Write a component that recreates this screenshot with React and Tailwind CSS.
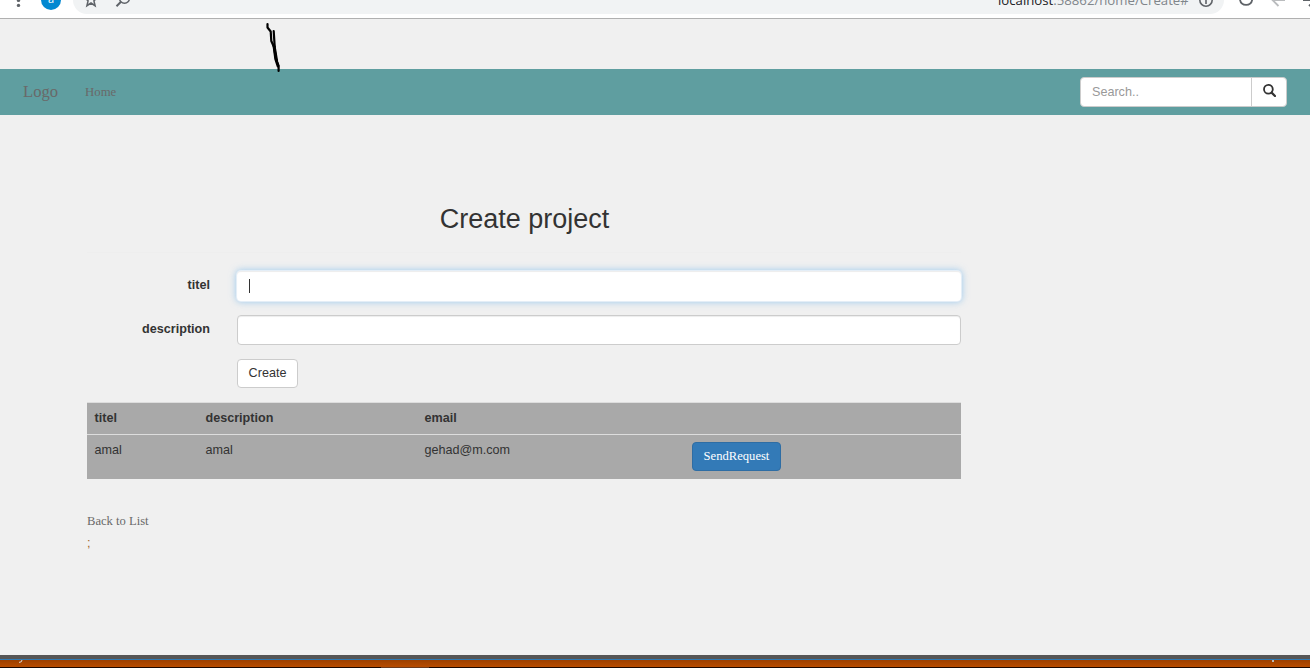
import React from "react";

function BrowserBar() {
  return (
    <div className="h-[19px] shrink-0 overflow-hidden border-b border-[#b0b0b0] bg-white">
      <div className="-mt-[14px] flex h-7 items-center">
        <svg className="h-7 w-[73px] shrink-0" viewBox="0 -14 73 28">
          <g fill="#5f6368">
            <circle cx="18.5" cy="-4.4" r="1.7" />
            <circle cx="18.5" cy="0.4" r="1.7" />
            <circle cx="18.5" cy="5.4" r="1.7" />
          </g>
          <circle cx="51" cy="0" r="10" fill="#0288d1" />
          <text x="51" y="3" textAnchor="middle" fontSize="11" fill="#fff" fontFamily="Open Sans, sans-serif">a</text>
        </svg>
        <div className="flex h-7 w-[1151px] shrink-0 items-center justify-between rounded-full bg-[#f1f3f4]">
          <svg className="h-7 w-[70px]" viewBox="73 -14 70 28" fill="none" stroke="#5f6368" strokeWidth="1.5">
            <path d="M91 -7.5 L92.8 -2.6 L97.5 -2.3 L93.9 .8 L95.1 5.7 L91 3 L86.9 5.7 L88.1 .8 L84.5 -2.3 L89.2 -2.6 Z" />
            <circle cx="124.5" cy="-1.8" r="5" />
            <path d="M121 1.7 L116.5 6.2" strokeWidth="2" />
          </svg>
          <div className="flex items-center">
            <span className="w-[191px] whitespace-nowrap font-['Open_Sans',sans-serif] text-[13.2px] leading-7 text-[#80868b]">
              <span className="text-[#202124]">localhost</span>:58862/home/Create#
            </span>
            <svg className="h-7 w-[35px]" viewBox="1189 -14 35 28" fill="none" stroke="#5f6368" strokeWidth="1.6">
              <circle cx="1206" cy="0" r="6.2" />
              <path d="M1206 -1 V4 M1206 -4 V-2.5" />
            </svg>
          </div>
        </div>
        <svg className="h-7 w-[86px] shrink-0" viewBox="1224 -14 86 28" fill="none" strokeWidth="1.8">
          <path d="M1240 -.2 A6.2 6.2 0 0 0 1252.2 -.2" stroke="#5f6368" />
          <path d="M1285 0 H1272.5 M1278.5 -6 L1272.5 0 L1278.5 6" stroke="#babcbe" />
          <path d="M1303 0 H1316 M1309 6 L1315 0" stroke="#5f6368" />
        </svg>
      </div>
    </div>
  );
}

function NavBar() {
  return (
    <nav className="mt-[50px] flex h-[46px] items-center bg-[#5f9ea0] pl-[23px] pr-[23px] font-['Liberation_Serif',serif] text-[#696969]">
      <a className="w-[62px] text-[16.6px] leading-[18px]">Logo</a>
      <a className="text-[12.8px] leading-[18px]">Home</a>
      <div className="ml-auto flex h-[30px] w-[207px] overflow-hidden rounded-[4px] border border-[#ccc] bg-white font-['Liberation_Sans',sans-serif] text-[12.6px]">
        <div className="flex w-[171px] items-center border-r border-[#ccc] pl-[11px] text-[#999]">Search..</div>
        <button className="flex flex-1 items-center justify-center pb-[3px]">
          <svg className="h-[13px] w-[13px]" viewBox="0 0 13 13" fill="none" stroke="#333">
            <circle cx="5.4" cy="5.3" r="4.4" strokeWidth="1.8" />
            <path d="M8.6 8.6 L12 12" strokeWidth="2.2" strokeLinecap="round" />
          </svg>
        </button>
      </div>
    </nav>
  );
}

function ProjectForm() {
  return (
    <div className="grid grid-cols-[124px_724px] gap-x-[26px] gap-y-[14px]">
      <label className="pr-px pt-[5px] text-right font-bold">titel</label>
      <div className="flex h-[30px] items-center rounded-[4px] bg-white pl-3 shadow-[inset_0_1px_1px_rgba(0,0,0,0.075),0_0_7px_1px_rgba(102,175,233,0.6)] ring-1 ring-[#e4eef7]">
        <span className="h-[14px] w-px bg-[#333]" />
      </div>
      <label className="pr-px pt-[5px] text-right font-bold">description</label>
      <div className="h-[30px] rounded-[4px] border border-[#ccc] bg-white shadow-[inset_0_1px_1px_rgba(0,0,0,0.075)]" />
      <button className="col-start-2 h-[29px] w-[61px] rounded-[4px] border border-[#ccc] bg-white pb-[2px] text-[#333]">Create</button>
    </div>
  );
}

function ProjectTable() {
  return (
    <table className="mt-[14px] w-[874px] table-fixed border-collapse bg-[#a9a9a9] text-left">
      <colgroup>
        <col className="w-[111px]" />
        <col className="w-[219px]" />
        <col className="w-[267px]" />
        <col className="w-[277px]" />
      </colgroup>
      <thead>
        <tr className="h-[32px] border-t border-[#ddd] align-top">
          <th className="pl-[7.5px] pt-[6px]">titel</th>
          <th className="pl-[7.5px] pt-[6px]">description</th>
          <th className="pl-[7.5px] pt-[6px]">email</th>
          <th />
        </tr>
      </thead>
      <tbody>
        <tr className="h-[44px] border-t border-[#ddd] align-top">
          <td className="pl-[7.5px] pt-[6px]">amal</td>
          <td className="pl-[7.5px] pt-[6px]">amal</td>
          <td className="pl-[7.5px] pt-[6px]">gehad@m.com</td>
          <td className="pl-2 pt-[7px]">
            <button className="block h-[29px] w-[89px] rounded-[4px] border border-[#2e6da4] bg-[#337ab7] pb-[2px] font-['Liberation_Serif',serif] text-white">
              SendRequest
            </button>
          </td>
        </tr>
      </tbody>
    </table>
  );
}

export default function App() {
  return (
    <div className="relative flex h-[668px] w-[1310px] flex-col overflow-hidden bg-[#f0f0f0] font-['Liberation_Sans',sans-serif] text-[12.6px] leading-[18px] text-[#333]">
      <BrowserBar />
      <NavBar />
      <main className="ml-[87px] flex w-[874px] flex-col">
        <h2 className="mt-[89px] h-[30px] pl-px text-center text-[27px] leading-[30px]">Create project</h2>
        <hr className="mb-[18px] mt-[18px] border-[#eee]" />
        <ProjectForm />
        <ProjectTable />
        <a className="mt-[33px] font-['Liberation_Serif',serif] text-[#696969]">Back to List</a>
        <p className="mt-[4px] text-[#a0622d]">;</p>
      </main>
      <footer className="mt-auto">
        <div className="h-1 bg-[#555]" />
        <div className="flex h-[9px] items-start justify-between border-b border-t border-b-[#1c0800] border-t-[#2e7ab5] bg-linear-to-b from-[#9c4000] to-[#b84c00] pl-[19px] pr-[36px]">
          <svg className="h-[3px] w-1" viewBox="0 0 4 3">
            <path d="M3 0 Q3 2.4 0 2.4" fill="none" stroke="#ddd" />
          </svg>
          <span className="h-[2px] w-[2px] bg-[#bbb]" />
        </div>
        <div className="-mt-px ml-[381px] h-px w-12 bg-[#6b3a1c]" />
      </footer>
      <svg className="absolute left-[264px] top-[20px] h-[54px] w-[18px]" viewBox="264 20 18 54" fill="none" stroke="#000" strokeLinecap="round" strokeLinejoin="round">
        <path d="M267.5 24 V27.5 L270.7 31.5 L271.3 41 L274 47 L276 59 L278.6 66 V71" strokeWidth="2.2" />
        <path d="M273.7 31 L274.7 47 L277 61" strokeWidth="2.2" />
        <path d="M273.8 45 L275.7 59 L278 66" strokeWidth="2.8" />
      </svg>
    </div>
  );
}
